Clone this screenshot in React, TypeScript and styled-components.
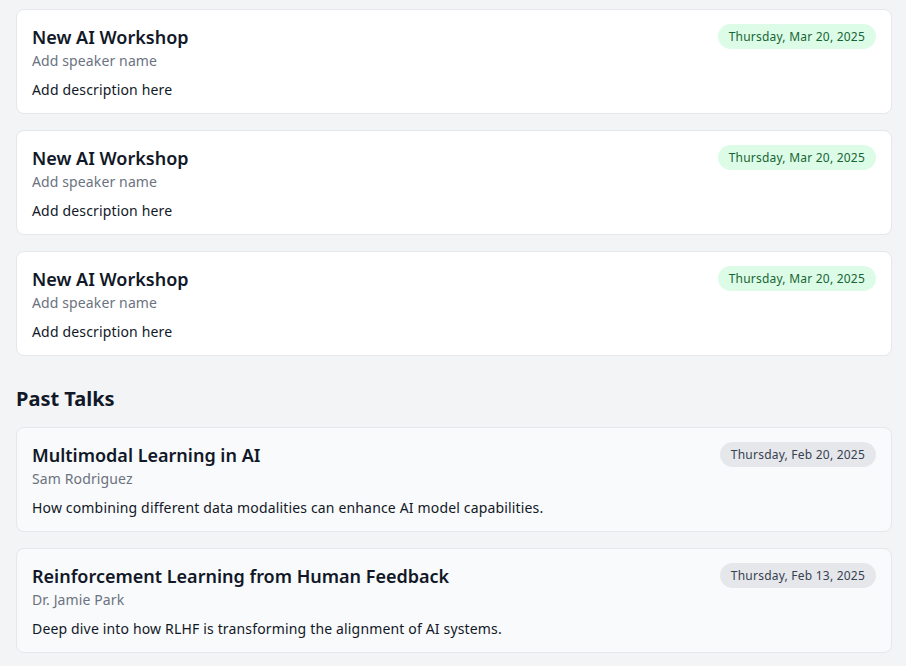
import React from "react";
import styled, { createGlobalStyle } from "styled-components";

const GlobalStyle = createGlobalStyle`
  html, body { margin: 0; padding: 0; background: #f3f4f6; }
  body { font-family: "Noto Sans", "Open Sans", sans-serif; color: #111827; }
  * { box-sizing: border-box; }
`;

const Page = styled.div`
  padding: 9px 14px 16px 16px;
  display: flex;
  flex-direction: column;
`;

const List = styled.div`
  display: flex;
  flex-direction: column;
  gap: 16px;
`;

const Card = styled.div<{ $past?: boolean }>`
  background: ${(p) => (p.$past ? "#f9fafb" : "#ffffff")};
  border: 1px solid #e5e7eb;
  border-radius: 8px;
  padding: 14px 15px 13px 15px;
  display: flex;
  justify-content: space-between;
  align-items: flex-start;
  gap: 16px;
`;

const Body = styled.div`
  display: flex;
  flex-direction: column;
`;

const Title = styled.h3`
  margin: 0;
  font-size: 18px;
  line-height: 26px;
  font-weight: 600;
  color: #111827;
`;

const Speaker = styled.div`
  margin-top: 1px;
  font-size: 14px;
  line-height: 20px;
  letter-spacing: 0.12px;
  color: #6b7280;
`;

const Desc = styled.p`
  margin: 9px 0 0;
  font-size: 14px;
  line-height: 20px;
  letter-spacing: 0.16px;
  color: #111827;
`;

const Badge = styled.span<{ $past?: boolean }>`
  flex-shrink: 0;
  font-size: 12px;
  line-height: 17px;
  letter-spacing: 0.22px;
  padding: 4px 11px;
  border-radius: 9999px;
  background: ${(p) => (p.$past ? "#e5e7eb" : "#dcfce7")};
  color: ${(p) => (p.$past ? "#374151" : "#166534")};
`;

const SectionTitle = styled.h2`
  margin: 29px 0 14px;
  font-size: 20px;
  line-height: 28px;
  font-weight: 700;
  color: #111827;
`;

type Talk = { title: string; speaker: string; desc: string; date: string };

const upcoming: Talk[] = [
  { title: "New AI Workshop", speaker: "Add speaker name", desc: "Add description here", date: "Thursday, Mar 20, 2025" },
  { title: "New AI Workshop", speaker: "Add speaker name", desc: "Add description here", date: "Thursday, Mar 20, 2025" },
  { title: "New AI Workshop", speaker: "Add speaker name", desc: "Add description here", date: "Thursday, Mar 20, 2025" },
];

const past: Talk[] = [
  {
    title: "Multimodal Learning in AI",
    speaker: "Sam Rodriguez",
    desc: "How combining different data modalities can enhance AI model capabilities.",
    date: "Thursday, Feb 20, 2025",
  },
  {
    title: "Reinforcement Learning from Human Feedback",
    speaker: "Dr. Jamie Park",
    desc: "Deep dive into how RLHF is transforming the alignment of AI systems.",
    date: "Thursday, Feb 13, 2025",
  },
];

const TalkCard = ({ t, isPast }: { t: Talk; isPast?: boolean }) => (
  <Card $past={isPast}>
    <Body>
      <Title>{t.title}</Title>
      <Speaker>{t.speaker}</Speaker>
      <Desc>{t.desc}</Desc>
    </Body>
    <Badge $past={isPast}>{t.date}</Badge>
  </Card>
);

export default function App() {
  return (
    <>
      <GlobalStyle />
      <Page>
        <List>
          {upcoming.map((t, i) => (
            <TalkCard key={i} t={t} />
          ))}
        </List>
        <SectionTitle>Past Talks</SectionTitle>
        <List>
          {past.map((t, i) => (
            <TalkCard key={i} t={t} isPast />
          ))}
        </List>
      </Page>
    </>
  );
}
